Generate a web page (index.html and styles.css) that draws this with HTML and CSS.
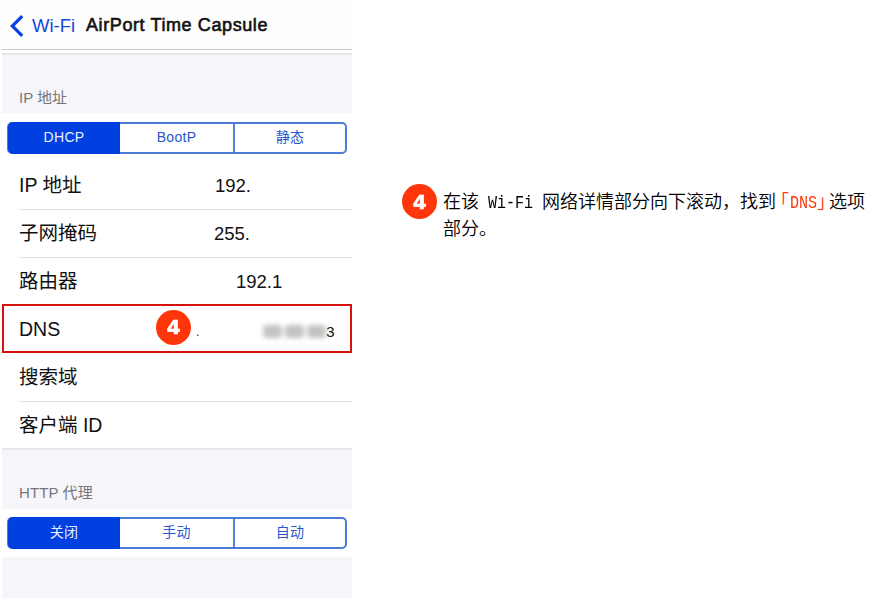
FILE: index.html
```
<!DOCTYPE html>
<html lang="zh-CN">
<head>
<meta charset="utf-8">
<title>AirPort Time Capsule</title>
<link rel="stylesheet" href="styles.css">
</head>
<body>
<main class="page">
  <section class="phone">
    <header class="nav">
      <svg class="chevron" width="14" height="22" viewBox="0 0 14 22"><path d="M12.2 1.2 2.3 11l9.9 9.8" fill="none" stroke="#0741e0" stroke-width="3.2"/></svg>
      <span class="back">Wi-Fi</span>
      <h1 class="title">AirPort Time Capsule</h1>
    </header>
    <h2 class="group">IP 地址</h2>
    <div class="segments">
      <span class="segment active">DHCP</span><span class="segment">BootP</span><span class="segment">静态</span>
    </div>
    <div class="rows">
      <div class="row"><span class="label">IP 地址</span><span class="value">192.</span></div>
      <div class="row"><span class="label">子网掩码</span><span class="value mask">255.</span></div>
      <div class="row last"><span class="label">路由器</span><span class="value router">192.1</span></div>
      <div class="row dns"><span class="label">DNS</span><span class="badge"><svg width="35" height="35" viewBox="0 0 35 35"><circle cx="17.5" cy="17.5" r="17.5" fill="#ff3609"/></svg><b class="num">4</b></span><span class="dot">.</span><span class="blurred"><i class="smudge"></i><i class="smudge"></i><i class="smudge"></i></span><span class="digit">3</span></div>
      <div class="row"><span class="label">搜索域</span></div>
      <div class="row last"><span class="label">客户端 ID</span></div>
    </div>
    <h2 class="group proxy">HTTP 代理</h2>
    <div class="segments lower">
      <span class="segment active">关闭</span><span class="segment">手动</span><span class="segment">自动</span>
    </div>
    <div class="foot"></div>
  </section>
  <section class="step">
    <span class="badge"><svg width="35" height="35" viewBox="0 0 35 35"><circle cx="17.5" cy="17.5" r="17.5" fill="#ff3609"/></svg><b class="num">4</b></span>
    <p class="text">在该<span class="latin wifi">Wi-Fi</span>网络详情部分向下滚动，找到<span class="key"><span class="open">「</span><span class="latin">DNS</span><span class="close">」</span></span>选项<br>部分。</p>
  </section>
</main>
</body>
</html>
```
FILE: styles.css
```
* { box-sizing: border-box; }
body { margin: 0; background: #fff; color: #111; font-family: "Liberation Sans", "Noto Sans CJK SC", sans-serif; }
.page { display: flex; align-items: flex-start; width: 890px; height: 600px; padding-left: 2px; overflow: hidden; }
.phone { width: 350px; flex: none; }
.nav { height: 50px; display: flex; align-items: center; padding: 2px 0 0 8px; border-bottom: 1px solid #ccc8cc; background: #fefeff; white-space: nowrap; }
.chevron { flex: none; }
.back { width: 54px; margin-left: 8px; color: #1747dc; font-size: 18.5px; }
.title { margin: 0; font-size: 18px; font-weight: 400; -webkit-text-stroke: .6px #111; letter-spacing: .6px; }
.group { margin: 3px 0 0; height: 60px; padding: 31px 0 0 17px; border-top: 2px solid #e8e8ec; background: #f5f5fa; color: #77777a; font-size: 15px; line-height: 24px; font-weight: 400; }
.proxy { margin: -1px 0 0; height: 61px; letter-spacing: .1px; }
.segments { display: grid; grid-template-columns: 111px 113px 1fr; width: 340px; height: 32px; margin: 9px 0 7px 5px; border: 1.5px solid #4273d3; border-width: 2px; border-color: #4b7cd6; border-radius: 5px; }
.segment { display: flex; align-items: center; justify-content: center; color: #2856cc; font-size: 14px; line-height: 20px; padding-bottom: 3px; letter-spacing: .3px; }
.segment + .segment + .segment { border-left: 2px solid #5283d9; }
.active { margin: -2px 0 -2px -1px; background: #0040e0; color: #e9f0ff; border-radius: 5px 0 0 5px; }
.lower { margin: 8px 0 8px 5px; }
.row { height: 48px; display: flex; align-items: center; position: relative; padding: 0 0 0 17px; font-size: 19.5px; line-height: 28px; white-space: nowrap; }
.row:not(.last):not(.dns)::after { content: ""; position: absolute; left: 17px; right: 0; bottom: -1px; height: 1px; background: #e1e1e5; }
.label { width: 196px; flex: none; }
.value { font-size: 18.5px; padding-top: 2px; }
.mask { margin-left: -1px; }
.router { margin-left: 21px; }
.dns { height: 49px; margin-top: -1px; border: 2px solid #d5100d; padding: 0 0 0 15px; }
.dns .label { width: 137px; }
.badge { display: grid; width: 35px; height: 35px; flex: none; place-items: center; }
.badge > * { grid-area: 1 / 1; }
.dns .badge { margin-top: -3px; }
.num { color: #fff; font: 700 19px/22px "DejaVu Sans", sans-serif; transform: scaleX(1.05); -webkit-text-stroke: .5px #fff; }
.dot { font-size: 12px; margin: 7px 0 0 5px; width: 67px; }
.blurred { display: flex; gap: 3px; width: 66px; height: 17px; margin-top: 5px; filter: blur(2.5px); }
.smudge { width: 19px; height: 13px; margin-top: 2px; background: #c2c2c4; border-radius: 4px; }
.digit { font-size: 15.5px; margin: 6px 0 0 -3px; }
.foot { height: 41px; background: #f5f5fa; }
.step { display: flex; padding-top: 184px; margin-left: 50px; }
.text { margin: 3px 0 0 6px; color: #000; font-family: "Noto Sans CJK SC", sans-serif; font-weight: 350; font-size: 18px; line-height: 27px; white-space: nowrap; }
.latin { display: inline-block; font-family: "Liberation Mono", monospace; font-size: 15px; line-height: 18px; transform: scaleY(1.25); transform-origin: 50% 75%; }
.wifi { margin: 0 9px; }
.key { color: #ff3609; }
.open, .close { font-feature-settings: "halt"; }
.open { margin: 0 1px 0 4px; }
.close { margin-right: 3px; }
```
